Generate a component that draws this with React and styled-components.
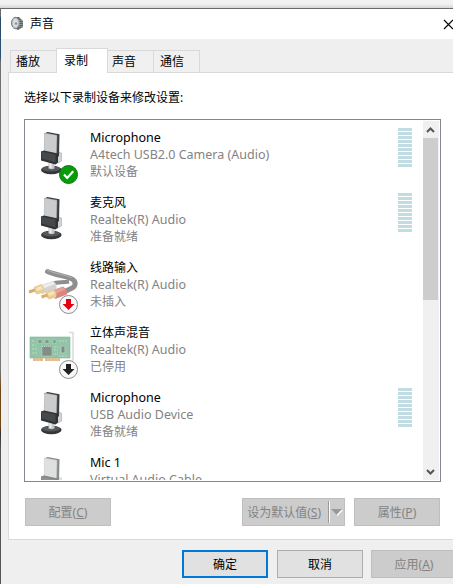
import React from 'react';
import styled, { createGlobalStyle, css } from 'styled-components';

const Global = createGlobalStyle`
  * { box-sizing: border-box; }
  html, body { margin: 0; overflow: hidden; background: #f2f2f2; }
  body { font: 12px/17px "Noto Sans", "Noto Sans CJK SC", sans-serif; color: #000; }
`;

const Desktop = styled.div`
  width: 453px;
  height: 584px;
  padding-top: 8px;
  overflow: hidden;
  background: linear-gradient(#f3f3f3 0, #f1f1f1 4px, #d6d6d6 8px, #d6d6d6 100%);
`;
const Dialog = styled.div`
  width: 470px;
  height: 600px;
  border-top: 1px solid #6b6b6b;
  border-left: 1px solid;
  border-image: linear-gradient(#6b6b6b 0, #6b6b6b 8px, #28496b 10px, #2d5279 50px, #707070 54px, #777 360px, #704515 382px, #704515 418px, #33302e 424px, #555 440px) 1;
  background: #efefef;
`;
const TitleBar = styled.header`
  display: flex;
  align-items: center;
  height: 30px;
  padding-left: 9px;
  background: #fff;
  svg { flex: none; }
`;
const Title = styled.span`
  flex: none;
  width: 413px;
  height: 19px;
  margin-left: 5px;
`;
const Tabs = styled.nav`
  display: flex;
  align-items: flex-end;
  height: 33px;
  padding-left: 9px;
`;
const Tab = styled.button`
  width: ${p => p.$w}px;
  height: 22px;
  padding: 0 0 0 ${p => p.$inset || 4}px;
  border: 1px solid #d9d9d9;
  border-width: 1px 1px 0 0;
  background: #f0f0f0;
  font: inherit;
  text-align: left;
  &:first-child { border-left-width: 1px; }
  ${p => p.$active && css`
    height: 25px;
    margin: 0 0 -1px -1px;
    padding: 0 0 2px 7px;
    border-left-width: 1px;
    background: #fff;
  `}
`;
const Panel = styled.section`
  height: 468px;
  margin-left: 7px;
  padding: 16px 0 0 15px;
  border: 1px solid #d9d9d9;
  background: #fff;
`;
const Prompt = styled.p`
  margin: 0 0 13px;
  height: 17px;
`;
const ListBox = styled.div`
  display: flex;
  width: 417px;
  height: 363px;
  padding: 1px;
  border: 1px solid #828790;
  background: #fff;
`;
const Devices = styled.div`
  flex: 1;
  height: 359px;
  overflow: hidden;
`;
const Row = styled.div`
  display: flex;
  height: 65px;
  padding-top: 8px;
`;
const IconCell = styled.div`
  width: 64px;
  height: 57px;
  opacity: ${p => (p.$faded ? 0.6 : 1)};
`;
const Info = styled.div`
  flex: 1;
  color: #838383;
  white-space: nowrap;
`;
const Line = styled.div`
  height: 17px;
  font-size: ${p => (p.$cjk ? 12 : 12.5)}px;
`;
const Name = styled(Line)`
  color: #000;
`;
const Level = styled.div`
  width: 14px;
  height: 39px;
  margin: -1px 11px 0 0;
  background: repeating-linear-gradient(#c1dde3 0 3px, #fff 3px 4px);
`;
const ScrollBar = styled.div`
  display: flex;
  flex-direction: column;
  width: 16px;
  background: #f0f0f0;
`;
const Arrow = styled.svg`
  width: 15px;
  height: 17px;
`;
const Thumb = styled.div`
  width: 15px;
  height: 162px;
  margin-bottom: auto;
  background: #cdcdcd;
`;
const Actions = styled.div`
  display: flex;
  padding: 16px 0 0 1px;
`;
const Footer = styled.footer`
  display: flex;
  padding: 10px 0 0 181px;
`;
const Button = styled.button`
  display: flex;
  align-items: center;
  justify-content: center;
  flex: none;
  width: 86px;
  height: 28px;
  margin-right: ${p => p.$gap || 0}px;
  padding: 0;
  border: 1px solid #adadad;
  background: #e1e1e1;
  color: #000;
  font: inherit;
  ${p => p.$primary && css`border: 2px solid #0078d7;`}
  ${p => p.disabled && css`border-color: #bfbfbf; background: #ccc; color: #838383;`}
`;
const SplitButton = styled(Button)`
  width: 103px;
  justify-content: flex-end;
`;
const Split = styled.svg`
  width: 16px;
  height: 24px;
  margin-left: 7px;
`;

const Badge = ({ kind }) => (
  <g>
    <circle cx="42.5" cy="45.5" r="9" fill={kind === 'check' ? '#079b0b' : '#f8f8f8'} stroke={kind === 'check' ? '#087a0b' : '#8d8d8d'} />
    {kind === 'check'
      ? <path d="M38 45.500l3.200 3.400 6-6.600" fill="none" stroke="#fff" strokeWidth="2.200" />
      : <path d="M40 40h5v5h3.500l-6 6-6-6H40z" fill={kind === 'red' ? '#e60012' : '#222'} />}
  </g>
);

const Mic = () => (
  <g>
    <ellipse cx="25.300" cy="41" rx="10.300" ry="4.200" fill="#343638" />
    <ellipse cx="25" cy="39.800" rx="9" ry="2.800" fill="#55585a" />
    <path d="M22.500 33h6v6.500q-3 1.500-6 0z" fill="#c5c8c9" />
    <path d="M23.500 34h2v5h-2z" fill="#efefef" />
    <path d="M31 23l4.500 1v8l-3.500 2h-3z" fill="#d2d4d5" stroke="#999c9e" strokeWidth=".5" />
    <path d="M18.500 4.500l3-1.500 12 2.300-.5 22-4 2z" fill="#3a3d40" />
    <path d="M18.700 4l12.300 2.300-.5 20-12.300-2.300z" fill="#cbcccd" stroke="#9da0a2" strokeWidth=".5" />
    <path d="M15 22.500l3-1 14 3v9l-2.500 2-14.500-4z" fill="#303336" />
    <path d="M15.500 22.500l14 3v8l-14-4z" fill="#46494c" />
  </g>
);

const Cable = () => (
  <g>
    <path d="M21.500 12.500C29 16 40 17 45 19.500C51 22 50 28 45 29.500L40 32" fill="none" stroke="#8f8f8f" strokeWidth="5" strokeLinecap="round" />
    <path d="M21 11C30 15 40 16 46 18.500" fill="none" stroke="#b4b4b4" strokeWidth="1" />
    <path d="M27 25C31 22 36 24 43 22.500" fill="none" stroke="#8f8f8f" strokeWidth="4" />
    <path d="M14 26.500l13-4.500q5 3 3 8l-14 5z" fill="#d3d3d7" />
    <path d="M15 27l12-4.500 2 2.500-13 5z" fill="#eeeef1" />
    <path d="M26 31.500l11-4q5 3 4 8L29 40z" fill="#d98680" />
    <path d="M27 32l10-4 2 2.500-11 5z" fill="#e6a39e" />
    <path d="M8 28l7-3q5 4 3 8.500l-7 2q-4-3-3-7.500zM20 33l7-3q5 4 3 8.500l-7 2q-4-3-3-7.500z" fill="#e8cc95" />
    <path d="M10 29l5-2 2 3-6 2M22 34l5-2 2 3-6 2" fill="#f7e5b9" />
    <path d="M3 33l6-2M15.500 38l6-2" stroke="#d8ae6c" strokeWidth="3" />
  </g>
);

const Card = () => (
  <g>
    <path d="M4 13h40v21H4z" fill="#92c5a8" stroke="#83b799" strokeWidth=".6" />
    <path d="M7 34h10v3H7zM19 34h15v3H19z" fill="#dfb98f" />
    <path d="M10 34v3M13 34v3M22 34v3M25 34v3M28 34v3M31 34v3" stroke="#f0d6b8" strokeWidth=".6" />
    <path d="M43 8.500h4V37" fill="none" stroke="#d9dcdb" strokeWidth="1.500" />
    <path d="M16 22.500h10v9.500H16z" fill="#858d89" stroke="#bdd3c8" strokeDasharray="1 1" />
    <path d="M35 22h4v7h-4z" fill="#7e8c85" stroke="#b4cbbd" />
    <path d="M12 15.500h4v4h-4zM19 15.500h4v4h-4zM27 15.500h3v4h-3z" fill="#7e9b89" stroke="#b4cfbe" strokeWidth=".7" />
    <path d="M6 17h3M6 21h4M6 25h6M6 29h6M28 23h4M28 26h4M28 30h4M33 17h8M33 32h8" stroke="#b8dac5" strokeDasharray="2 1" />
  </g>
);

const art = { mic: Mic, cable: Cable, card: Card };

const devices = [
  { name: 'Microphone', latin: true, driver: 'A4tech USB2.0 Camera (Audio)', state: '默认设备', icon: 'mic', badge: 'check', level: true },
  { name: '麦克风', driver: 'Realtek(R) Audio', state: '准备就绪', icon: 'mic', level: true },
  { name: '线路输入', driver: 'Realtek(R) Audio', state: '未插入', icon: 'cable', badge: 'red' },
  { name: '立体声混音', driver: 'Realtek(R) Audio', state: '已停用', icon: 'card', badge: 'black' },
  { name: 'Microphone', latin: true, driver: 'USB Audio Device', state: '准备就绪', icon: 'mic', level: true },
  { name: 'Mic 1', latin: true, driver: 'Virtual Audio Cable', icon: 'mic', faded: true },
];

function Device({ d }) {
  const Art = art[d.icon];
  return (
    <Row>
      <IconCell $faded={d.faded}>
        <svg width="64" height="57"><Art />{d.badge && <Badge kind={d.badge} />}</svg>
      </IconCell>
      <Info>
        <Name $cjk={!d.latin}>{d.name}</Name>
        <Line>{d.driver}</Line>
        {d.state && <Line $cjk>{d.state}</Line>}
      </Info>
      {d.level && <Level />}
    </Row>
  );
}

export default function App() {
  return (
    <>
      <Global />
      <Desktop>
        <Dialog>
          <TitleBar>
            <svg width="15" height="18" viewBox="0 0 15 18">
              <path d="M4 2l5 0 4 4v6l-5 3-4-2z" fill="#5e6365" />
              <ellipse cx="5.500" cy="8" rx="4" ry="5.700" fill="#b9c0c3" stroke="#7c8386" />
              <ellipse cx="5.500" cy="8" rx="2.500" ry="4" fill="#d9dfe1" />
              <circle cx="6" cy="8.500" r="1.300" fill="#8b9396" />
              <path d="M10 3v11M12 5v8" stroke="#b3b8ba" strokeDasharray="1 1" />
            </svg>
            <Title>声音</Title>
            <svg width="11" height="11"><path d="M1 1l9 9M10 1l-9 9" stroke="#000" strokeWidth="1.200" /></svg>
          </TitleBar>
          <Tabs>
            <Tab $w={47} $inset={5}>播放</Tab>
            <Tab $w={52} $active>录制</Tab>
            <Tab $w={46}>声音</Tab>
            <Tab $w={46} $inset={6}>通信</Tab>
          </Tabs>
          <Panel>
            <Prompt>选择以下录制设备来修改设置:</Prompt>
            <ListBox>
              <Devices>{devices.map((d, i) => <Device key={i} d={d} />)}</Devices>
              <ScrollBar>
                <Arrow><path d="M4 11l3.500-3.500L11 11" fill="none" stroke="#555" strokeWidth="2" /></Arrow>
                <Thumb />
                <Arrow><path d="M4 7l3.500 3.500L11 7" fill="none" stroke="#555" strokeWidth="2" /></Arrow>
              </ScrollBar>
            </ListBox>
            <Actions>
              <Button disabled $gap={131}><span>配置(<u>C</u>)</span></Button>
              <SplitButton disabled $gap={9}>
                <span>设为默认值(<u>S</u>)</span>
                <Split>
                  <path d="M.5 1v22" stroke="#999" /><path d="M1.500 1v22" stroke="#fff" />
                  <path d="M4 10h11l-5.500 6z" fill="#fff" /><path d="M3 9h11l-5.500 6z" fill="#999" />
                </Split>
              </SplitButton>
              <Button disabled><span>属性(<u>P</u>)</span></Button>
            </Actions>
          </Panel>
          <Footer>
            <Button $primary $gap={9}>确定</Button>
            <Button $gap={8}>取消</Button>
            <Button disabled><span>应用(<u>A</u>)</span></Button>
          </Footer>
        </Dialog>
      </Desktop>
    </>
  );
}
